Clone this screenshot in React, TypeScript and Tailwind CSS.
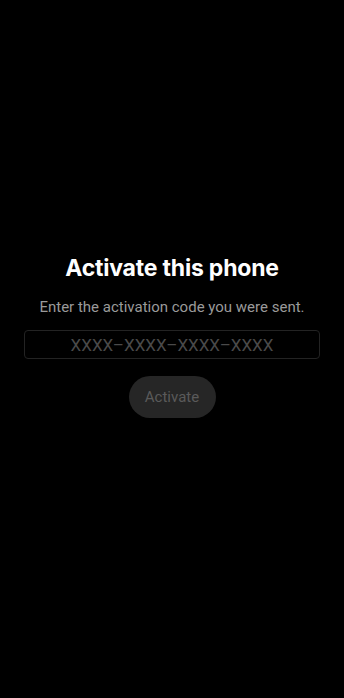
export default function App() {
  return (
    <div
      className="min-h-[698px] w-full bg-black flex flex-col items-center"
      style={{ fontFamily: "Roboto, 'Noto Sans', sans-serif" }}
    >
      <h1 className="mt-[253px] font-['Inter'] text-[23px] leading-[30px] font-bold text-white tracking-[-0.2px]">
        Activate this phone
      </h1>
      <p className="mt-[14px] text-[15px] leading-[20px] text-[#9a9a9a]">
        Enter the activation code you were sent.
      </p>
      <input
        className="mt-[13px] w-[296px] h-[29px] rounded-[4px] border border-[#232323] bg-black text-center text-[17px] text-white placeholder:text-[#4a4a4a] outline-none"
        placeholder="XXXX–XXXX–XXXX–XXXX"
      />
      <button
        disabled
        className="mt-[17px] w-[87px] h-[42px] rounded-full bg-[#262626] text-[15px] text-[#5a5a5a]"
      >
        Activate
      </button>
    </div>
  );
}
